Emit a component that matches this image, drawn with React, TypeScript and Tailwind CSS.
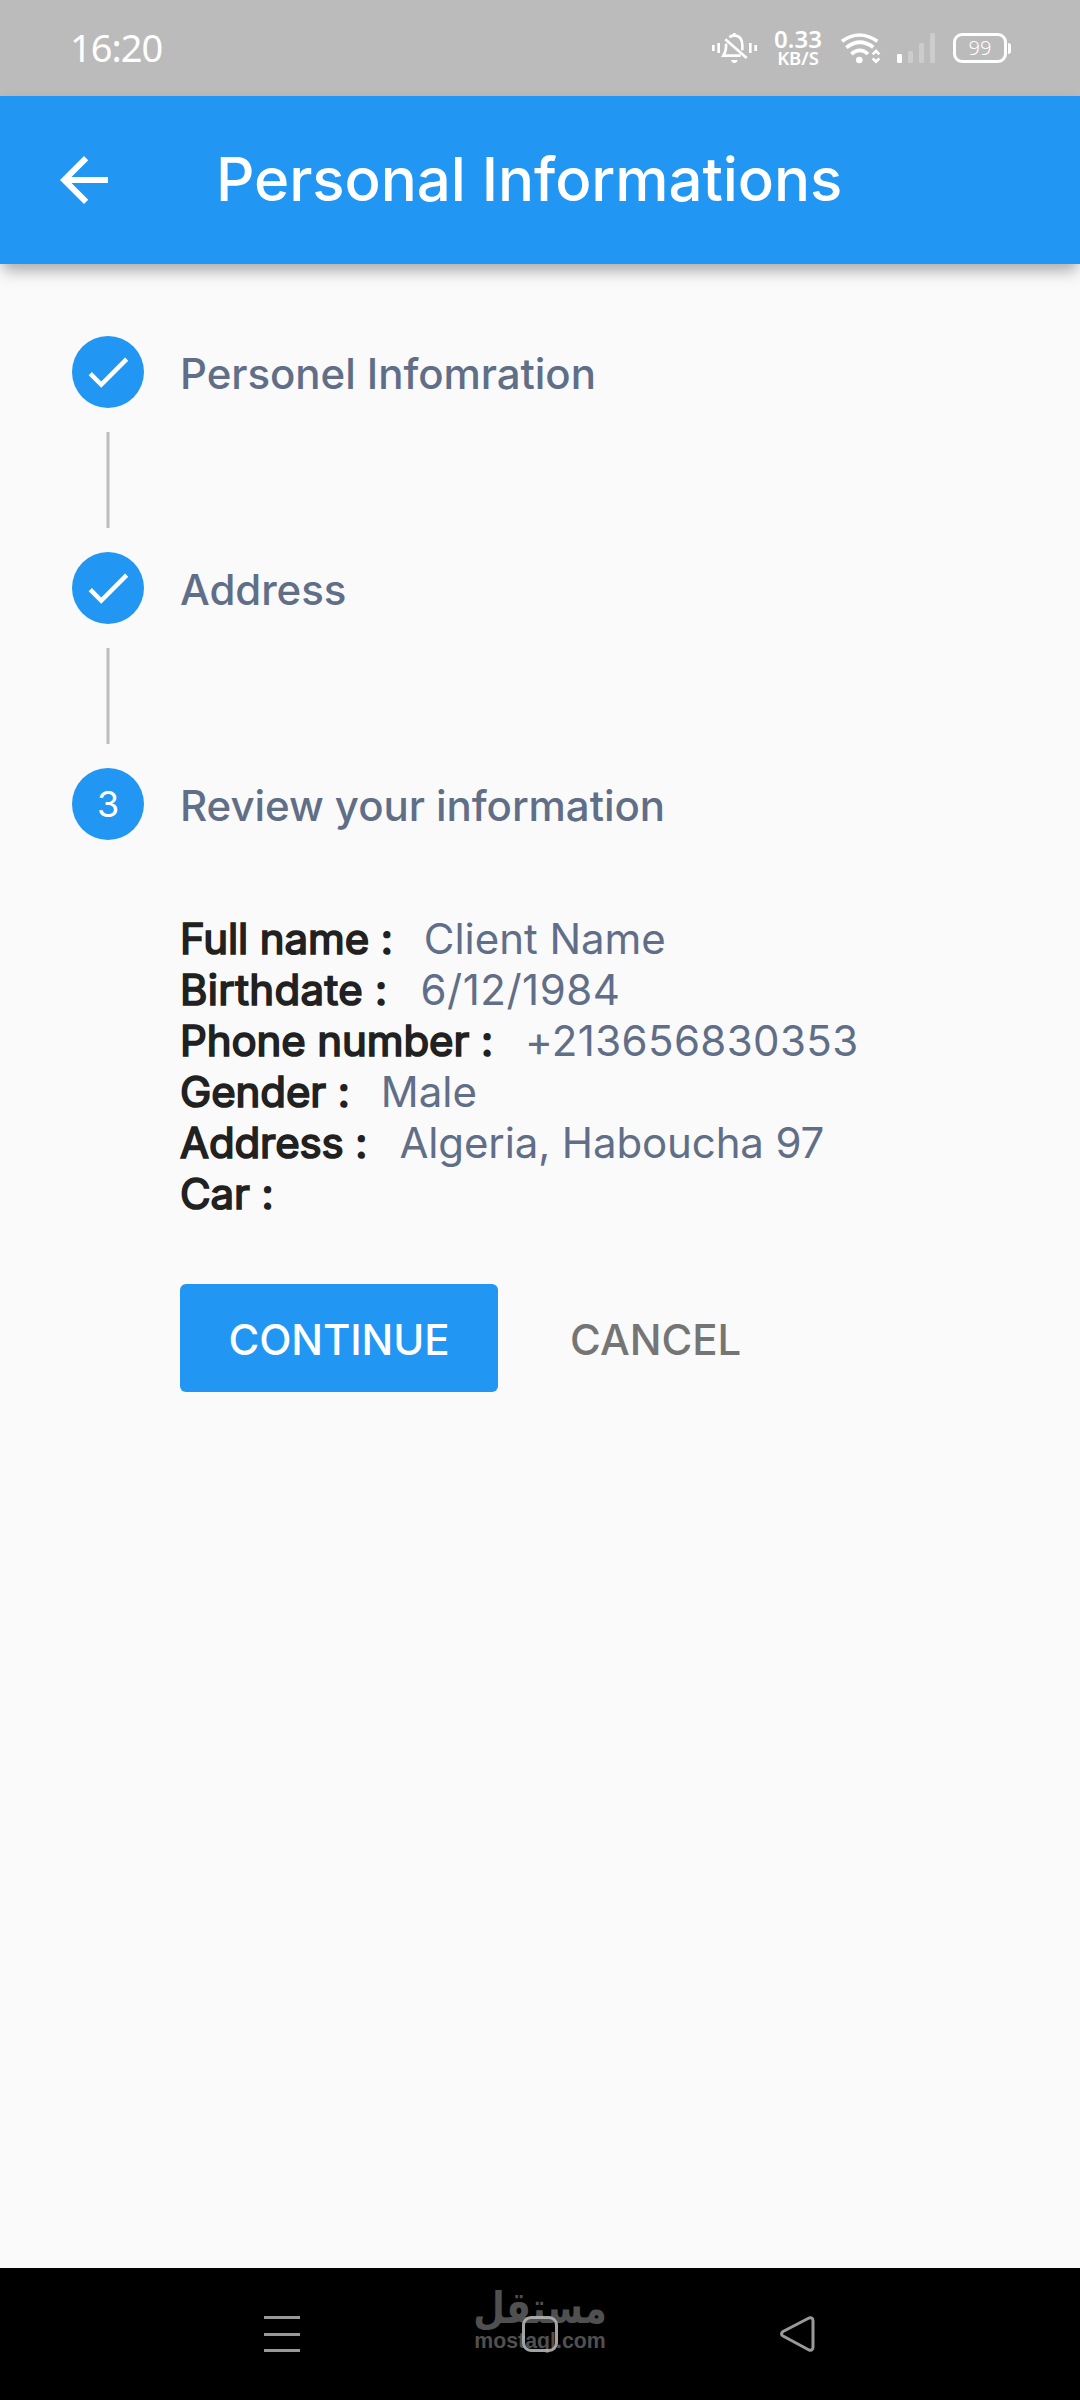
import type { ReactNode } from "react";

const details = [
  { label: "Full name :", value: "Client Name", labelClass: "tracking-[-0.1px]", valueClass: "ml-[31px] tracking-[-0.05px]" },
  { label: "Birthdate :", value: "6/12/1984", labelClass: "tracking-[0.35px]", valueClass: "ml-[33px] tracking-[0.5px]" },
  { label: "Phone number :", value: "+213656830353", labelClass: "tracking-[-0.1px]", valueClass: "ml-[32px] tracking-[0.4px]" },
  { label: "Gender :", value: "Male", labelClass: "tracking-[-0.1px]", valueClass: "ml-[31px]" },
  { label: "Address :", value: "Algeria, Haboucha 97", labelClass: "tracking-[-0.1px]", valueClass: "ml-[32px] tracking-[-0.12px]" },
  { label: "Car :", value: "", labelClass: "tracking-[-0.1px]", valueClass: "" },
];

function MutedBell() {
  return (
    <svg className="h-[34px] w-[46px]" viewBox="0 0 138 102" fill="none" stroke="white">
      <path d="M4 42v18M20 36v30M115 36v30M131 42v18" strokeWidth="8" />
      <path d="M52 19Q59 13 67 13Q91 15 91 42V58M42 38Q44 58 34 74H86M67 6V14" strokeWidth="8" />
      <path d="M40 25L104 81" strokeWidth="8" />
      <path d="M57 87h20q-2 9-10 9t-10-9z" fill="white" stroke="none" />
    </svg>
  );
}

function Wifi() {
  return (
    <svg className="h-[34px] w-[42px]" viewBox="0 0 126 102" fill="none" stroke="white" strokeWidth="11">
      <path d="M6 28Q58 -10 112 28" />
      <path d="M19 47Q59 15 100 46" />
      <path d="M34 66Q60 44 84 66" />
      <circle cx="58" cy="84" r="10" fill="white" stroke="none" />
      <path d="M98 67L108 57L118 67M98 79L108 89L118 79" strokeWidth="8" />
    </svg>
  );
}

function Signal() {
  return (
    <svg className="h-[34px] w-[40px]" viewBox="0 0 120 102" fill="white">
      <rect x="3" y="66" width="15" height="27" rx="4" />
      <rect x="36" y="57" width="15" height="36" rx="4" opacity="0.25" />
      <rect x="69" y="33" width="15" height="60" rx="4" opacity="0.25" />
      <rect x="102" y="3" width="15" height="90" rx="4" opacity="0.25" />
    </svg>
  );
}

function StatusBar() {
  return (
    <div className="flex h-24 items-start bg-[#bbbbbb] pl-[70px] font-['Noto_Sans'] text-white">
      <span className="mt-[21px] w-[642px] text-[38px] leading-[52px] tracking-[-1px]">16:20</span>
      <div className="mt-[31px]">
        <MutedBell />
      </div>
      <div className="mt-[28px] ml-[15px] flex w-[50px] flex-col items-center font-semibold">
        <span className="text-[24px] leading-[22px]">0.33</span>
        <span className="text-[18.5px] leading-[16px]">KB/S</span>
      </div>
      <div className="mt-[32px] ml-[17px]">
        <Wifi />
      </div>
      <div className="mt-[32px] ml-[14px]">
        <Signal />
      </div>
      <div className="mt-[33px] ml-[17px] flex items-center">
        <div className="flex h-[30px] w-[54px] items-center justify-center rounded-[9px] border-3 border-white text-[20px] font-light">
          99
        </div>
        <div className="ml-px h-[11px] w-[3px] rounded-r-sm bg-white" />
      </div>
    </div>
  );
}

function Check() {
  return (
    <svg className="size-[54px]" viewBox="0 0 24 24" fill="white">
      <path d="M9 16.17L4.83 12l-1.42 1.41L9 19 21 7l-1.41-1.41z" />
    </svg>
  );
}

function Step({ icon, title }: { icon: ReactNode; title: string }) {
  return (
    <div className="flex h-[72px] items-start">
      <div className="flex size-[72px] items-center justify-center rounded-full bg-[#2196f3] text-[36px] text-white">
        {icon}
      </div>
      <h2 className="mt-3 ml-9 text-[42px] leading-[51px] font-medium tracking-[-0.05px] text-[#616e88]">
        {title}
      </h2>
    </div>
  );
}

function Connector() {
  return <div className="my-6 ml-[34px] h-24 w-1 border-x border-[#dcdcdc] bg-[#bdbdbd]" />;
}

function NavBar() {
  return (
    <nav className="flex h-[132px] items-start justify-between bg-black px-[264px] pt-12">
      <div className="flex h-9 w-9 flex-col justify-between">
        <div className="h-[3px] bg-[#999]" />
        <div className="h-[3px] bg-[#999]" />
        <div className="h-[3px] bg-[#999]" />
      </div>
      <div className="relative size-9">
        <div className="absolute -top-[32px] left-1/2 flex w-[160px] -translate-x-1/2 flex-col items-center font-bold text-[#505050]">
          <span dir="rtl" className="origin-center scale-y-120 font-['DejaVu_Sans'] text-[36.5px] leading-[50px]">
            مستقل
          </span>
          <span className="-mt-[6px] font-['Liberation_Sans'] text-[21.3px] leading-[26px]">mostaql.com</span>
        </div>
        <div className="absolute inset-0 rounded-[9px] border-3 border-[#b4b4b4]/90" />
      </div>
      <svg className="h-9 w-9" viewBox="0 0 36 36" fill="none" stroke="#999" strokeWidth="3">
        <path d="M3 15.5Q0 18 3 20L29 34Q33 35 33 31V5Q33 1 29 2Z" strokeLinejoin="round" />
      </svg>
    </nav>
  );
}

export default function App() {
  return (
    <div className="flex h-[2400px] w-[1080px] flex-col overflow-hidden bg-[#fafafa] font-['Inter',sans-serif]">
      <StatusBar />

      <header className="flex h-[168px] items-center bg-[#2196f3] pl-12 text-white shadow-[0_11px_14px_-3px_rgba(0,0,0,0.26),0_3px_12px_-2px_rgba(0,0,0,0.1)]">
        <svg className="size-[72px]" viewBox="0 0 24 24" fill="white">
          <path d="M20 11H7.83l5.59-5.59L12 4l-8 8 8 8 1.41-1.41L7.83 13H20v-2z" />
        </svg>
        <h1 className="-mt-[2px] ml-24 text-[60px] leading-[72px] font-medium tracking-[-0.07px]">
          Personal Informations
        </h1>
      </header>

      <main className="flex-1 px-[72px] pt-[72px]">
        <Step icon={<Check />} title="Personel Infomration" />
        <Connector />
        <Step icon={<Check />} title="Address" />
        <Connector />
        <Step icon="3" title="Review your information" />

        <div className="mt-[73px] ml-[108px] text-[42px] leading-[51px]">
          {details.map(({ label, value, labelClass, valueClass }) => (
            <p key={label} className="flex h-[51px] whitespace-pre text-[#616e88]">
              <span className={`text-[#212121] [-webkit-text-stroke:1.7px_#212121] ${labelClass}`}>{label}</span>
              <span className={valueClass}>{value}</span>
            </p>
          ))}
        </div>

        <div className="mt-[65px] ml-[108px] flex text-[42px] leading-[51px] font-medium">
          <button className="h-[108px] w-[318px] rounded-[6px] bg-[#2196f3] pt-[2px] tracking-[-0.1px] text-white">
            CONTINUE
          </button>
          <button className="ml-6 h-[108px] px-12 pt-[2px] text-[#757575]">CANCEL</button>
        </div>
      </main>

      <NavBar />
    </div>
  );
}
